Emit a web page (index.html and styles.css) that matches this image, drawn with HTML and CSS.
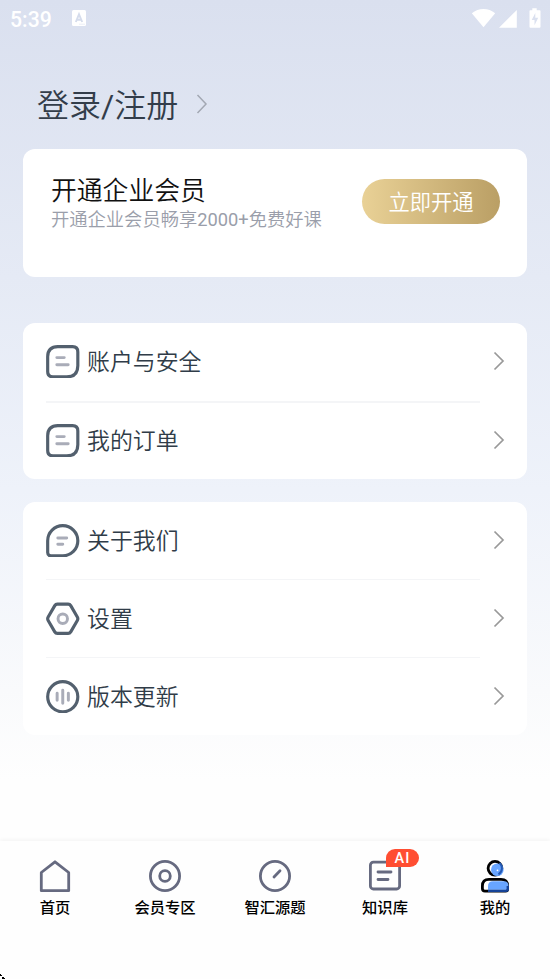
FILE: index.html
```html
<!DOCTYPE html>
<html lang="zh-CN">
<head>
<meta charset="utf-8">
<title>我的</title>
<link rel="stylesheet" href="styles.css">
</head>
<body>
<div class="app">
  <header class="status">
    <span class="clock">5:39</span>
    <svg class="keyboard" width="14" height="16" viewBox="0 0 14 16"><rect width="14" height="16" rx="1.5" fill="#fff"/><path d="M3.8 12 7 4.300 10.200 12M5 9.700h4" fill="none" stroke="#d5dcec" stroke-width="1.900"/><path d="M7.500 14.200h5" stroke="#d5dcec" stroke-dasharray="1 1"/></svg>
    <svg class="signals" width="70" height="22" viewBox="0 0 70 22" fill="#fff"><path d="M.8 5.3C7.500-.4 17.500-.4 24.200 5.300L12.500 19.300z"/><path d="M45.800 2v17.800H28z"/><path fill-rule="evenodd" d="M61.300.2h4.400v2h3q.8 0 .8.800v15.800q0 .9-.9.900h-9.200q-.9 0-.9-.9V3q0-.8.800-.8h2zM64.300 5l-3.600 7h2.800v5.200l3.700-7.400h-2.900z"/></svg>
  </header>
  <main class="content">
    <div class="login"><span>登录<i class="latin">/</i>注册</span>
      <svg width="12" height="20" viewBox="0 0 12 20"><path d="M1.500 1l8.500 9-8.500 9"/></svg>
    </div>
    <section class="card member">
      <div>
        <h1>开通企业会员</h1>
        <p>开通企业会员畅享<i class="latin">2000+</i>免费好课</p>
      </div>
      <button>立即开通</button>
    </section>
    <section class="card menu account">
      <div class="row">
        <svg class="icon" viewBox="0 0 34 34"><path d="M12 1.700h15q5.300 0 5.300 5.300v14q0 11.300-11.300 11.300H7q-5.300 0-5.300-5.300V12Q1.700 1.700 12 1.700z"/><path class="soft" d="M11 12.800h7.500M11 20h11.500"/></svg>
        <span>账户与安全</span><svg class="chevron" viewBox="0 0 12 20"><path d="M1.500 1.500 10 10l-8.500 8.500"/></svg>
      </div>
      <div class="row">
        <svg class="icon" viewBox="0 0 34 34"><path d="M12 1.700h15q5.300 0 5.300 5.300v14q0 11.300-11.300 11.300H7q-5.300 0-5.300-5.300V12Q1.700 1.700 12 1.700z"/><path class="soft" d="M11 12.800h7.500M11 20h11.500"/></svg>
        <span>我的订单</span><svg class="chevron" viewBox="0 0 12 20"><path d="M1.500 1.500 10 10l-8.500 8.500"/></svg>
      </div>
    </section>
    <section class="card menu general">
      <div class="row">
        <svg class="icon" viewBox="0 0 34 34"><path d="M17 1.700a15.300 15.300 0 1 1 0 30.600H5Q1.700 32.300 1.700 29V17A15.300 15.300 0 0 1 17 1.700z"/><path class="soft" d="M12 14.300h9M12 20.500h5"/></svg>
        <span>关于我们</span><svg class="chevron" viewBox="0 0 12 20"><path d="M1.500 1.500 10 10l-8.500 8.500"/></svg>
      </div>
      <div class="row">
        <svg class="icon" viewBox="0 0 34 34"><path d="M11.500 2.200h11q1.700 0 2.600 1.500l6.700 11.600q1 1.700 0 3.400l-6.700 11.600q-.9 1.500-2.600 1.500h-11q-1.700 0-2.600-1.500L2.200 18.700q-1-1.700 0-3.400L8.900 3.700q.9-1.500 2.600-1.500z"/><circle class="soft" cx="17" cy="17" r="4.800"/></svg>
        <span>设置</span><svg class="chevron" viewBox="0 0 12 20"><path d="M1.500 1.500 10 10l-8.500 8.500"/></svg>
      </div>
      <div class="row">
        <svg class="icon" viewBox="0 0 34 34"><circle cx="17" cy="17" r="15.300"/><path class="soft" d="M11.300 13.500v7M17 10.500v13M22.700 13.500v7"/></svg>
        <span>版本更新</span><svg class="chevron" viewBox="0 0 12 20"><path d="M1.500 1.500 10 10l-8.500 8.500"/></svg>
      </div>
    </section>
  </main>
  <nav class="tabs">
    <div class="tab"><svg viewBox="0 0 36 36"><path d="M4.300 14.500 18 3.800l13.700 10.700V32.700H4.300z"/></svg><span>首页</span></div>
    <div class="tab"><svg viewBox="0 0 36 36"><circle cx="18" cy="18" r="14.600"/><circle cx="18" cy="18" r="5.300"/></svg><span>会员专区</span></div>
    <div class="tab"><svg viewBox="0 0 36 36"><circle cx="18" cy="18" r="14.600"/><path d="M17 19l6-6.200" stroke-linecap="round"/></svg><span>智汇源题</span></div>
    <div class="tab library"><svg viewBox="0 0 36 36"><rect x="3.400" y="4.200" width="29.200" height="26.800" rx="3"/><path d="M11 14h13M11 21.500h10" stroke-linecap="round"/></svg><b class="badge">AI</b><span>知识库</span></div>
    <div class="tab"><svg class="person" viewBox="0 0 36 36"><circle cx="18" cy="10.300" r="6.900" fill="#fff" stroke="#000" stroke-width="2.800"/><circle cx="20.300" cy="11.800" r="6.300" fill="#68a5ff"/><path d="M22.500 5.100a6.900 6.900 0 0 1-1 11.200" fill="none" stroke="#2459b4" stroke-width="2"/><circle cx="20.500" cy="12.300" r=".9" fill="#fff"/><path d="M12 21.400h12q6.600 0 6.600 6.600v3q0 2.100-2.100 2.100H8q-2.600 0-2.600-2.600V28q0-6.600 6.600-6.600z" fill="#fff" stroke="#000" stroke-width="2.800"/><path d="M16 23.300h11q4.500 0 4.500 4.500v4H11v-3.500q0-5 5-5z" fill="#68a5ff"/><path d="M11 32.900h18q1.800 0 1.800-1.800v-3" fill="none" stroke="#154398" stroke-width="2.400"/></svg><span>我的</span></div>
  </nav>
</div>
<svg class="corner" width="5" height="5" viewBox="0 0 5 5"><path d="M0 0h1v1h1v1H0zM2 3h2v1h1v1H2z"/></svg>
</body>
</html>
```
FILE: styles.css
```css
* { box-sizing: border-box; }
body { margin: 0; font-family: Roboto, "Noto Sans CJK SC DemiLight", "Noto Sans CJK SC", sans-serif; font-weight: 350; }
svg { display: block; flex: none; }
.latin { font-style: normal; font-weight: 400; }
.app { display: flex; flex-direction: column; height: 979px; overflow: hidden; background: linear-gradient(#dae0ef 0, #e5eaf5 277px, #eef2fa 490px, #f9fafc 690px, #fefefe 780px); }
.status { display: flex; height: 38px; padding: 8px 9px 0 10px; color: #fff; }
.clock { width: 62px; font-size: 21.200px; line-height: 23px; font-weight: 500; }
.keyboard { margin-top: 2px; }
.signals { margin-left: auto; }
.content { flex: 1; padding: 0 23px; }
.login { display: flex; align-items: center; height: 111px; padding: 21px 0 0 14px; gap: 18px; color: #333d4a; font-size: 32px; line-height: 48px; }
.login span { padding-top: 3px; }
.login svg { fill: none; stroke: #a3a8b3; stroke-width: 1.500; }
.card { border-radius: 12px; background: #fff; }
.member { display: flex; justify-content: space-between; height: 128px; padding: 0 27px 0 28px; }
.member h1 { margin: 24px 0 0; color: #111; font-size: 25.800px; line-height: 36px; font-weight: inherit; }
.member p { margin: -1px 0 0; color: #9a9eaa; font-size: 18.300px; line-height: 24px; white-space: nowrap; }
.member button { width: 138px; height: 45px; margin-top: 30px; padding: 2px 0 0; border: 0; border-radius: 23px; background: linear-gradient(90deg, #e9d196, #ba9f65); color: #fff; font: inherit; font-size: 21.300px; line-height: 43px; }
.menu { padding: 0 23px; }
.account { height: 156px; margin-top: 46px; }
.general { height: 233px; margin-top: 23px; }
.row { position: relative; display: flex; align-items: center; height: 78px; color: #303c48; font-size: 22.900px; line-height: 34px; }
.row > span { padding-top: 2px; }
.account .row + .row { height: 79px; padding-top: 1px; }
.row + .row::before { content: ""; position: absolute; top: -1px; left: 0; width: 434px; height: 1px; background: #f4f5f7; }
.account .row + .row::before { top: 0; height: 2px; }
.icon { width: 33.500px; height: 33.500px; margin: 0 7.500px 1px 0; fill: none; stroke: #53606e; stroke-width: 3.200; stroke-linejoin: round; }
.soft { stroke: #a9acb8; stroke-width: 3; stroke-linecap: round; }
.chevron { width: 12px; height: 20px; margin: 0 -1px 2px auto; fill: none; stroke: #999; stroke-width: 1.700; }
.tabs { display: grid; grid-template-columns: repeat(5, 1fr); height: 138px; padding-top: 17px; background: #fefefe; box-shadow: 0 -1px 4px #0000000d; font-family: Roboto, "Noto Sans CJK SC", sans-serif; }
.tab { position: relative; display: flex; flex-direction: column; align-items: center; color: #000; font-size: 15.300px; line-height: 24px; font-weight: 500; }
.tab svg { width: 36px; height: 36px; margin-bottom: 1px; fill: none; stroke: #666a80; stroke-width: 2.800; stroke-linejoin: round; }
.tab span { padding-top: 1px; }
.tab .person { stroke: none; stroke-linejoin: miter; }
.badge { position: absolute; top: -9px; left: 56px; width: 33px; height: 18px; border-radius: 9px 9px 9px 0; background: #ff4e32; color: #fff; font: 500 14.500px/19px Roboto, sans-serif; letter-spacing: 1.200px; text-align: center; }
.corner { position: absolute; left: 0; bottom: 0; }
```
